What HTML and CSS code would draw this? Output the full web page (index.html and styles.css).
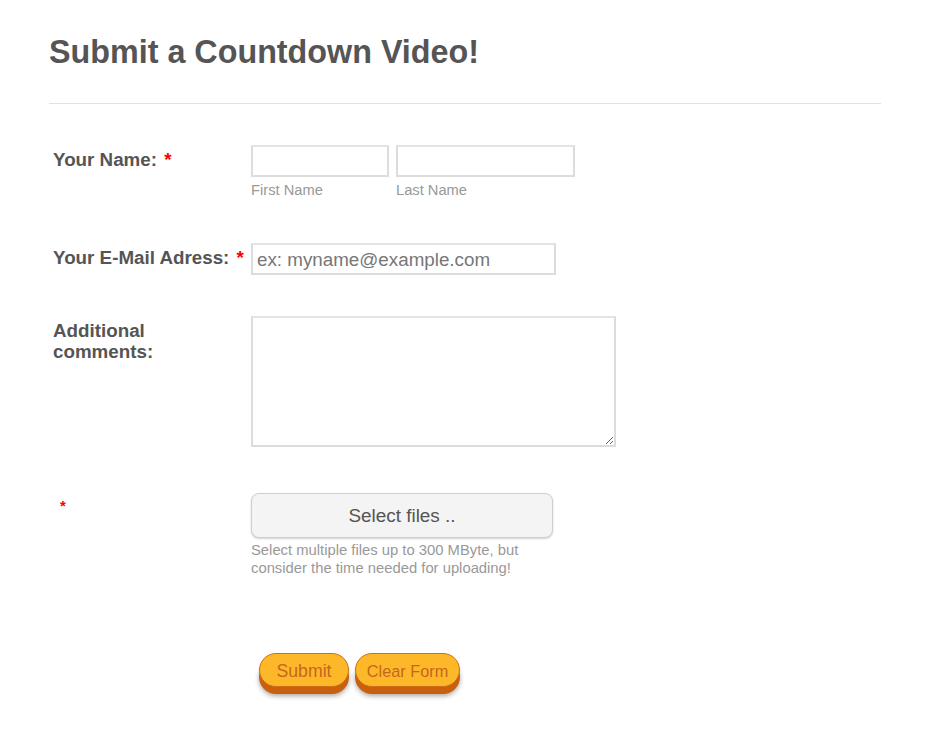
FILE: index.html
```html
<!DOCTYPE html>
<html lang="en">
<head>
    <meta charset="UTF-8">
    <meta name="viewport" content="width=device-width, initial-scale=1.0">
    <title>Submit a Countdown Video!</title>
    <link rel="stylesheet" href="styles.css">
</head>
<body>
    <div class="page">
        <h1 class="title">Submit a Countdown Video!</h1>
        <hr class="divider">

        <form class="form" onsubmit="return false">
            <div class="row row-name">
                <label class="label">Your Name: <span class="req">*</span></label>
                <div class="name-parts">
                    <div class="name-part">
                        <input class="input input-first" type="text">
                        <span class="sublabel">First Name</span>
                    </div>
                    <div class="name-part">
                        <input class="input input-last" type="text">
                        <span class="sublabel">Last Name</span>
                    </div>
                </div>
            </div>

            <div class="row row-email">
                <label class="label">Your E-Mail Adress: <span class="req">*</span></label>
                <input class="input input-email" type="email" placeholder="ex: myname@example.com">
            </div>

            <div class="row row-comments">
                <label class="label">Additional<br>comments:</label>
                <textarea class="textarea"></textarea>
            </div>

            <div class="row row-files">
                <label class="label label-files"><span class="req req-small">*</span></label>
                <div class="upload">
                    <button class="file-button" type="button">Select files ..</button>
                    <p class="hint">Select multiple files up to 300 MByte, but<br>consider the time needed for uploading!</p>
                </div>
            </div>

            <div class="actions">
                <button class="btn btn-submit" type="submit">Submit</button>
                <button class="btn btn-clear" type="reset">Clear Form</button>
            </div>
        </form>
    </div>
</body>
</html>
```

FILE: styles.css
```css
* {
    box-sizing: border-box;
}
body {
    margin: 0;
    font-family: "Liberation Sans", Arial, sans-serif;
    background: #fff;
    color: #555;
}
.page {
    padding: 0 49px 40px;
}
.title {
    margin: 34px 0 0;
    font-size: 32.3px;
    line-height: 37px;
    font-weight: bold;
    color: #555;
}
.divider {
    margin: 32px 0 0;
    border: none;
    height: 1px;
    background: #e2e2e2;
}
.form {
    padding-left: 4px;
}
.row {
    display: flex;
    align-items: flex-start;
}
.row-name {
    margin-top: 41px;
}
.row-email {
    margin-top: 44px;
}
.row-comments {
    margin-top: 41px;
}
.row-files {
    margin-top: 46px;
}
.label {
    width: 198px;
    flex-shrink: 0;
    padding-top: 4px;
    font-size: 18.8px;
    line-height: 21px;
    font-weight: bold;
    color: #555;
}
.req {
    margin-left: 2px;
    color: #f00;
    font-weight: bold;
}
.label-files {
    padding-top: 4px;
    line-height: 15px;
}
.req-small {
    display: inline-block;
    margin-left: 7px;
    font-size: 15px;
}
.name-parts {
    display: flex;
    gap: 7px;
}
.name-part {
    display: flex;
    flex-direction: column;
}
.input {
    height: 32px;
    border: 2px solid #dcdcdc;
    border-top-color: #e4e4e4;
    background: #fff;
    padding: 1px 4px 0;
    font-family: inherit;
    font-size: 18.8px;
    color: #555;
    outline: none;
}
.input::placeholder {
    color: #777;
}
.input-first {
    width: 138px;
}
.input-last {
    width: 179px;
}
.input-email {
    width: 305px;
}
.sublabel {
    margin-top: 5px;
    font-size: 14.7px;
    line-height: 17px;
    color: #999;
}
.textarea {
    width: 365px;
    height: 131px;
    border: 2px solid #dcdcdc;
    border-top-color: #e4e4e4;
    padding: 4px;
    font-family: inherit;
    font-size: 16px;
    outline: none;
}
.upload {
    display: flex;
    flex-direction: column;
}
.file-button {
    width: 302px;
    height: 45px;
    border: 1px solid #cfcfcf;
    border-radius: 8px;
    background: #f4f4f4;
    box-shadow: 0 1px 2px rgba(0, 0, 0, 0.18);
    font-family: inherit;
    font-size: 18.9px;
    color: #555;
    cursor: pointer;
}
.hint {
    margin: 3px 0 0;
    font-size: 14.8px;
    line-height: 18px;
    color: #999;
}
.actions {
    display: flex;
    gap: 6px;
    margin-top: 76px;
    padding-left: 206px;
}
.btn {
    height: 34px;
    border: 1px solid #cf6e16;
    border-radius: 17px;
    background: #fdb829;
    color: #c6661c;
    font-family: inherit;
    padding: 2px 0 0;
    cursor: pointer;
    box-shadow: 0 7px 0 #c9600d, 0 9px 5px rgba(0, 0, 0, 0.35);
}
.btn-submit {
    width: 90px;
    font-size: 17.7px;
}
.btn-clear {
    width: 105px;
    font-size: 16.3px;
}
```
